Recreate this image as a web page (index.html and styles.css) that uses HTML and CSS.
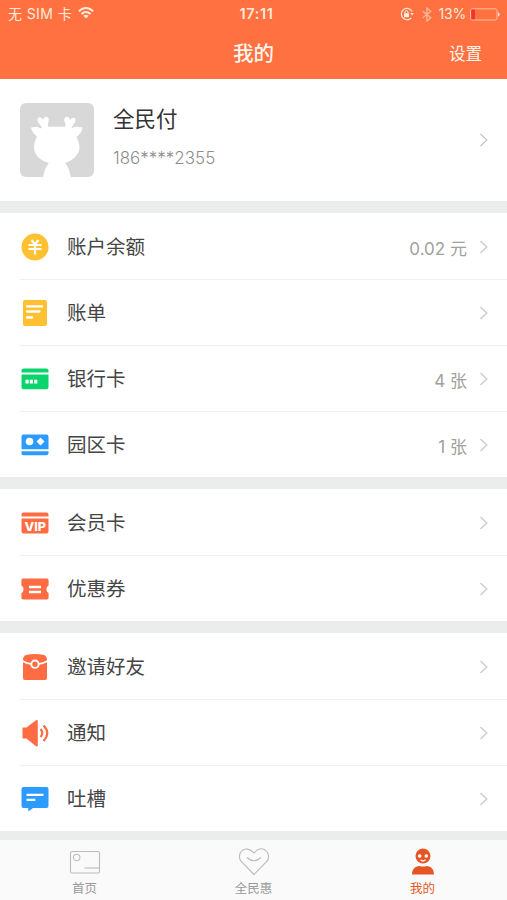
FILE: index.html
```html
<!DOCTYPE html>
<html lang="zh-CN">
<head>
<meta charset="utf-8">
<meta name="viewport" content="width=device-width, initial-scale=1">
<title>我的</title>
<link rel="stylesheet" href="styles.css">
</head>
<body>
<svg class="defs" width="0" height="0" aria-hidden="true">
  <symbol id="chevron" viewBox="0 0 10 14"><path d="M1.500 1 7.800 7 1.500 13" fill="none" stroke="#c9c9c9" stroke-width="1.300"/></symbol>
</svg>
<header class="header">
  <div class="status">
    <div class="status-left">
      <span>无 SIM 卡</span>
      <svg width="16" height="12" viewBox="0 0 16 12"><g fill="none" stroke="#ffeadb" stroke-width="1.900"><path d="M.9 4.300C5-.1 11-.1 15.100 4.300"/><path d="M3.500 7C6.200 4.300 9.800 4.300 12.500 7"/></g><path d="M5.300 8.800c1.600-1.500 3.800-1.500 5.400 0L8 11.500z" fill="#ffeadb"/></svg>
    </div>
    <div class="time">17:11</div>
    <div class="status-right">
      <svg width="14" height="14" viewBox="0 0 14 14"><path d="M12.200 4.600A5.700 5.700 0 1 0 11.200 11" fill="none" stroke="#ffe3d3" stroke-width="1.200"/><path d="M10.400 6h3.400l-1.700 2.600z" fill="#ffe3d3"/><rect x="4" y="6.200" width="5" height="4" rx=".6" fill="#fff0e6"/><path d="M5 6.400V5.200a1.500 1.500 0 0 1 3 0v1.200" fill="none" stroke="#fff0e6" stroke-width="1"/></svg>
      <svg class="bluetooth" width="10" height="15" viewBox="0 0 10 15"><path d="m.8 4.200 8 6.600-3.900 3.200V1l3.900 3.200-8 6.600" fill="none" stroke="#ffb798" stroke-width="1.300"/></svg>
      <span class="percent">13%</span>
      <svg class="battery" width="30" height="13" viewBox="0 0 30 13"><rect x=".6" y=".8" width="26.400" height="11.200" rx="1.800" fill="none" stroke="#ffc0a3" stroke-width="1"/><path d="M1.300 1.500h3.600v9.800H1.300z" fill="#f5322d"/><path d="M28 4.300q1.700.5 1.700 2.100T28 8.500z" fill="#ffe3d3"/></svg>
    </div>
  </div>
  <div class="nav"><h1>我的</h1><a class="settings">设置</a></div>
</header>
<main>
  <section class="profile">
    <svg class="avatar" width="74" height="74" viewBox="0 0 74 74"><rect width="74" height="74" rx="6" fill="#d8d8d8"/><path fill="#fff" d="M23 74.500C24 69 26 63 29 60C21 58 14 52 14 45C14 40 15.500 37 17 33.500C14 31 11.500 28 11 24.500C15 23.500 19 24 22 25.500C22 22.500 17 20.500 17.500 16.500C18 13 22 14 23 17.500C23.500 13.500 27 12.500 28.500 15.500C29.500 18.500 27 21 28.500 23.800H45C47 21.500 43 18 44.500 15.500C46 12.500 49.500 13.500 50 17.500C51.500 14 55.500 14 55.500 17C55.500 20.500 52 22 51.500 25.500C54 23.500 58 23 62.500 24.500C62 29 59 32 56.500 34C58 37 59.500 41 59.500 45C59 52 52 58 45 60C48 63 50 69 51 74.500Z"/></svg>
    <div class="identity"><div class="name">全民付</div><div class="phone">186****2355</div></div>
    <svg class="chevron" width="10" height="14"><use href="#chevron"/></svg>
  </section>
  <section class="group">
    <div class="row">
      <svg class="icon" viewBox="0 0 28 28"><circle cx="14" cy="14" r="13.500" fill="#ffc031"/><path d="m10.500 7 3.500 4.300L17.500 7M7.500 12h13M7.500 16h13M14 11v10.500" fill="none" stroke="#fff" stroke-width="2.200"/></svg>
      <span class="label">账户余额</span><span class="value">0.02 元</span><svg class="chevron" width="10" height="14"><use href="#chevron"/></svg>
    </div>
    <div class="row">
      <svg class="icon" viewBox="0 0 28 28"><rect x="2" y="1" width="24" height="26" rx="2" fill="#ffc031"/><path d="M6 7.300h15M6 12.500h12.500M6 18.500h5" stroke="#fff" stroke-width="2.300" stroke-linecap="round"/></svg>
      <span class="label">账单</span><svg class="chevron" width="10" height="14"><use href="#chevron"/></svg>
    </div>
    <div class="row">
      <svg class="icon" viewBox="0 0 28 28"><path d="M2.500 3.500h23q2 0 2 2v2H.5v-2q0-2 2-2zM.5 9.500h27v12.800q0 2-2 2h-23q-2 0-2-2z" fill="#0bd46c"/><path d="M4.500 14.800h3.200v3.700H4.500zm4.300 0H12v3.700H8.800zm4.300 0h3.200v3.700h-3.200z" fill="#fff"/></svg>
      <span class="label">银行卡</span><span class="value">4 张</span><svg class="chevron" width="10" height="14"><use href="#chevron"/></svg>
    </div>
    <div class="row">
      <svg class="icon" viewBox="0 0 28 28"><path d="M2.500 3.500h23q2 0 2 2v12.800H.5V5.500q0-2 2-2zM.5 20.300h27v2q0 2-2 2h-23q-2 0-2-2z" fill="#2b9bff"/><circle cx="8.500" cy="10.500" r="3.800" fill="#fff"/><path d="m19.500 6.500 4 4-4 4-4-4z" fill="#fff"/></svg>
      <span class="label">园区卡</span><span class="value">1 张</span><svg class="chevron" width="10" height="14"><use href="#chevron"/></svg>
    </div>
  </section>
  <section class="group">
    <div class="row">
      <svg class="icon" viewBox="0 0 28 28"><path d="M2.500 3.500h23q2 0 2 2v2H.5v-2q0-2 2-2zM.5 9.500h27v13q0 2-2 2h-23q-2 0-2-2z" fill="#ff6c43"/><text class="vip" x="14.200" y="21.600" text-anchor="middle" textLength="21.500" lengthAdjust="spacingAndGlyphs">VIP</text></svg>
      <span class="label">会员卡</span><svg class="chevron" width="10" height="14"><use href="#chevron"/></svg>
    </div>
    <div class="row">
      <svg class="icon" viewBox="0 0 28 28"><path d="M2 3.500h24q1.600 0 1.600 1.600v5.400q-2.200 1-2.200 3.700t2.200 3.700v4.900q0 1.700-1.600 1.700H2q-1.600 0-1.600-1.700v-4.900q2.200-1 2.200-3.700T.4 10.500V5.100Q.4 3.500 2 3.500z" fill="#ff6c43"/><path d="M8 12h12M8 17h12" stroke="#fff" stroke-width="2.300"/></svg>
      <span class="label">优惠券</span><svg class="chevron" width="10" height="14"><use href="#chevron"/></svg>
    </div>
  </section>
  <section class="group">
    <div class="row">
      <svg class="icon" viewBox="0 0 28 28"><path d="M2 7q0-4 3-5 9-2 18 0 3 1 3 5v18q0 2-2 2H4q-2 0-2-2z" fill="#ff6c43"/><path d="M1.500 8Q6 10.800 10.500 11M17.500 11Q22 10.800 26.500 8" fill="none" stroke="#fff" stroke-width="1.700"/><circle cx="14" cy="11.200" r="3.700" fill="#ff6c43" stroke="#fff" stroke-width="1.900"/></svg>
      <span class="label">邀请好友</span><svg class="chevron" width="10" height="14"><use href="#chevron"/></svg>
    </div>
    <div class="row">
      <svg class="icon" viewBox="0 0 28 28"><path d="M1.500 8.500h4L15 1.200q1.800-.8 1.800 1v24q0 1.800-1.800 1L5.500 19.500h-4z" fill="#ff6c43"/><path d="M19.500 10q3.500 4 0 8M22.500 6.500q7.500 7.500 0 15.500" fill="none" stroke="#ff6c43" stroke-width="2.200"/></svg>
      <span class="label">通知</span><svg class="chevron" width="10" height="14"><use href="#chevron"/></svg>
    </div>
    <div class="row">
      <svg class="icon" viewBox="0 0 28 28"><path d="M2.500 2h23q2 0 2 2v17q0 2-2 2H12l-4.700 3.500V23H2.500q-2 0-2-2V4q0-2 2-2z" fill="#2b9bff"/><path d="M5.500 9.800h17M5.500 14.800h8.800" stroke="#fff" stroke-width="2.200"/></svg>
      <span class="label">吐槽</span><svg class="chevron" width="10" height="14"><use href="#chevron"/></svg>
    </div>
  </section>
</main>
<nav class="tabs">
  <div class="tab"><svg width="32" height="28" viewBox="0 0 32 28"><g fill="none" stroke="#bcbcbc" stroke-width="1.100"><rect x="1.500" y="3.500" width="29" height="21.500" rx="1.500"/><circle cx="7.700" cy="9.500" r="3.200"/><path d="M15.500 20h15"/></g></svg><span>首页</span></div>
  <div class="tab"><svg width="32" height="28" viewBox="0 0 32 28"><g fill="none" stroke="#bcbcbc" stroke-width="1.100"><path d="M16 26.500 3.500 13.700C.5 10.500.8 5.500 3.800 2.800 7-.1 12 .5 16 5 20-.1 25-.3 28.200 2.800c3 2.700 3.300 7.700.3 10.900z"/><path d="M9 9.500q7 6.500 14 0"/></g></svg><span>全民惠</span></div>
  <div class="tab active"><svg width="32" height="28" viewBox="0 0 32 28"><circle cx="16" cy="8" r="7.500" fill="#e65524"/><path d="M5 26.500c0-5 3-8.500 7.500-8.500q3.500 1 7 0c4.500 0 7.500 3.500 7.500 8.500z" fill="#e65524"/><circle cx="12.700" cy="8" r="1.800" fill="#fff"/><circle cx="19.300" cy="8" r="1.800" fill="#fff"/><path d="M13.500 11.800q2.500 2.400 5 0" fill="none" stroke="#fff" stroke-width="1.200"/></svg><span>我的</span></div>
</nav>
</body>
</html>
```
FILE: styles.css
```css
* { box-sizing: border-box; }
body {
  margin: 0;
  height: 900px;
  display: flex;
  flex-direction: column;
  overflow: hidden;
  background: #ebeded;
  color: #454545;
  font-family: Inter, "Noto Sans CJK SC", sans-serif;
}
svg { display: block; flex: none; }
.defs { position: absolute; }
.header { height: 79px; background: #ff7140; color: #fff4ec; }
.status {
  height: 28px;
  padding: 0 7px 0 8px;
  display: grid;
  grid-template-columns: 1fr auto 1fr;
  align-items: center;
  font-size: 14px;
  line-height: 28px;
  color: #ffeadb;
}
.status-left, .status-right { display: flex; align-items: center; }
.status-left { gap: 6px; letter-spacing: .4px; }
.status-left svg { margin-top: -2px; }
.status-right { justify-content: flex-end; }
.bluetooth { margin: 0 7px 0 8px; }
.percent { letter-spacing: -.2px; }
.battery { margin-left: 4px; }
.time { margin-left: 5px; font-weight: 600; font-size: 14.5px; letter-spacing: .6px; }
.nav {
  height: 51px;
  display: grid;
  grid-template-columns: 1fr auto 1fr;
  align-items: center;
}
.nav h1 { grid-column: 2; margin: 0; font-size: 20.5px; font-weight: 500; line-height: 50px; }
.settings { justify-self: end; margin: 2px 25px 0 0; font-size: 16.5px; line-height: 49px; }
main { display: grid; gap: 12px; }
.profile {
  height: 122px;
  padding: 0 18px 0 20px;
  display: flex;
  align-items: center;
  background: #fff;
}
.identity { margin: -6px auto 0 19px; }
.name { font-size: 21.5px; line-height: 34px; color: #333; }
.phone { margin-top: 7px; font-size: 17px; line-height: 30px; font-weight: 300; color: #8d8d8d; }
.group { background: #fff; }
.row {
  height: 66px;
  margin-left: 20px;
  padding: 2px 18px 0 0;
  display: flex;
  align-items: center;
}
.row + .row { padding-top: 1px; border-top: 1px solid #f0f0f0; }
.icon { width: 28px; height: 28px; margin: 0 18px 0 1px; }
.label { flex: 1; font-size: 19.5px; line-height: 30px; }
.value { margin: 3px 12px 0 0; font-size: 17px; line-height: 26px; color: #a0a0a0; }
.vip { font: 800 12px Inter, sans-serif; fill: #fff; }
.tabs {
  height: 60px;
  margin-top: 9px;
  display: grid;
  grid-template-columns: repeat(3, 1fr);
  background: #fafafa;
}
.tab {
  padding-top: 8px;
  display: flex;
  flex-direction: column;
  align-items: center;
  font-size: 12.5px;
  line-height: 25px;
  color: #999;
}
.active { color: #e65524; }
```
